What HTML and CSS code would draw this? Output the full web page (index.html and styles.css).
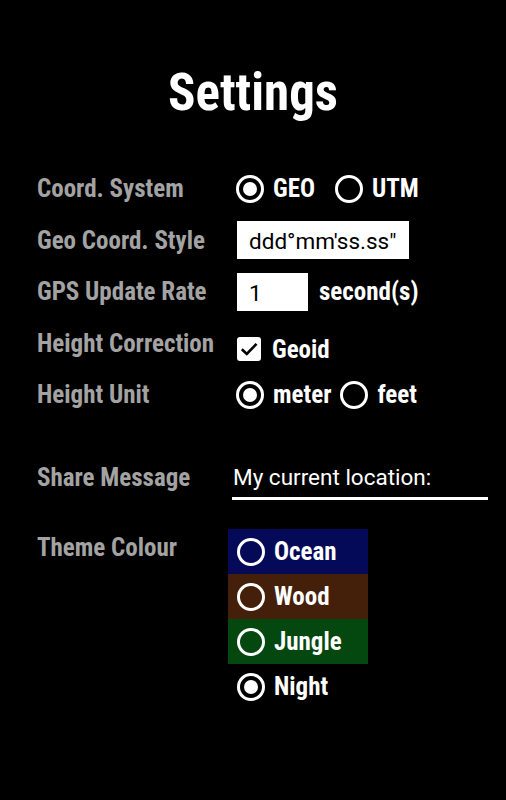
FILE: index.html
```html
<!DOCTYPE html>
<html lang="en">
<head>
    <meta charset="UTF-8">
    <meta name="viewport" content="width=device-width, initial-scale=1.0">
    <title>Settings</title>
    <link rel="stylesheet" href="styles.css">
</head>
<body>
    <div class="page">
        <h1 class="title">Settings</h1>

        <div class="settings">
            <div class="row">
                <div class="label">Coord. System</div>
                <div class="control">
                    <span class="option"><span class="radio checked"></span>GEO</span>
                    <span class="option"><span class="radio"></span>UTM</span>
                </div>
            </div>

            <div class="row">
                <div class="label">Geo Coord. Style</div>
                <div class="control">
                    <div class="box wide">ddd°mm'ss.ss"</div>
                </div>
            </div>

            <div class="row">
                <div class="label">GPS Update Rate</div>
                <div class="control">
                    <div class="box narrow">1</div>
                    <span class="unit">second(s)</span>
                </div>
            </div>

            <div class="row">
                <div class="label">Height Correction</div>
                <div class="control low">
                    <span class="option">
                        <span class="checkbox">
                            <svg viewBox="0 0 24 24" width="24" height="24"><path d="M4.8 12.2 L9.8 17 L19.5 6.8" fill="none" stroke="#000" stroke-width="2.6"/></svg>
                        </span>Geoid
                    </span>
                </div>
            </div>

            <div class="row">
                <div class="label">Height Unit</div>
                <div class="control">
                    <span class="option tight"><span class="radio checked"></span>meter</span>
                    <span class="option"><span class="radio"></span>feet</span>
                </div>
            </div>

            <div class="row share">
                <div class="label">Share Message</div>
                <div class="control">
                    <div class="line-input">My current location:</div>
                </div>
            </div>

            <div class="row theme">
                <div class="label">Theme Colour</div>
                <div class="themes">
                    <div class="theme-item ocean"><span class="radio"></span>Ocean</div>
                    <div class="theme-item wood"><span class="radio"></span>Wood</div>
                    <div class="theme-item jungle"><span class="radio"></span>Jungle</div>
                    <div class="theme-item"><span class="radio checked"></span>Night</div>
                </div>
            </div>
        </div>
    </div>
</body>
</html>
```

FILE: styles.css
```css
* {
    margin: 0;
    padding: 0;
    box-sizing: border-box;
}

body {
    background: #000;
    color: #fff;
    font-family: 'Roboto Condensed', Roboto, sans-serif;
    font-stretch: condensed;
    font-weight: 700;
    min-height: 100vh;
}

.page {
    padding: 65px 17px 0 37px;
}

.title {
    text-align: center;
    font-size: 51px;
    line-height: 56px;
    margin-left: -20px;
    margin-bottom: 42px;
}

.row {
    display: flex;
    align-items: center;
    height: 51.5px;
}

.label {
    width: 199px;
    flex-shrink: 0;
    color: #a3a3a3;
    font-size: 25px;
    line-height: 29px;
}

.control {
    display: flex;
    align-items: center;
    font-size: 25px;
    line-height: 29px;
}

.control.low {
    padding-top: 12px;
}

.option {
    display: flex;
    align-items: center;
    margin-right: 20px;
}

.option.tight {
    margin-right: 9px;
}

.radio {
    width: 28px;
    height: 28px;
    border: 3px solid #fff;
    border-radius: 50%;
    margin-right: 9px;
    display: flex;
    align-items: center;
    justify-content: center;
    flex-shrink: 0;
}

.radio.checked::after {
    content: "";
    width: 14px;
    height: 14px;
    border-radius: 50%;
    background: #fff;
}

.checkbox {
    width: 24px;
    height: 24px;
    margin-left: 1px;
    background: #fff;
    border-radius: 3px;
    margin-right: 11px;
    display: flex;
}

.box {
    background: #fff;
    color: #000;
    font-family: Roboto, sans-serif;
    font-stretch: normal;
    font-weight: 400;
    font-size: 22.5px;
    height: 38px;
    line-height: 40px;
    padding: 0 12px;
    margin-left: 1px;
}

.box.wide {
    width: 172px;
}

.box.narrow {
    width: 71px;
    margin-right: 11px;
}

.row.share {
    margin-top: 31px;
}

.line-input {
    width: 256px;
    margin-left: -4px;
    margin-top: 10px;
    font-family: Roboto, sans-serif;
    font-stretch: normal;
    font-weight: 400;
    font-size: 22.5px;
    line-height: 26px;
    padding: 0 1px 7px;
    border-bottom: 3px solid #fff;
}

.row.theme {
    height: auto;
    align-items: flex-start;
    margin-top: 26px;
}

.row.theme .label {
    padding-top: 4px;
    width: 191px;
}

.themes {
    width: 140px;
}

.theme-item {
    display: flex;
    align-items: center;
    height: 45px;
    padding-left: 9px;
    font-size: 25px;
}

.ocean {
    background: #050a58;
}

.wood {
    background: #44200a;
}

.jungle {
    background: #04480f;
}
```
